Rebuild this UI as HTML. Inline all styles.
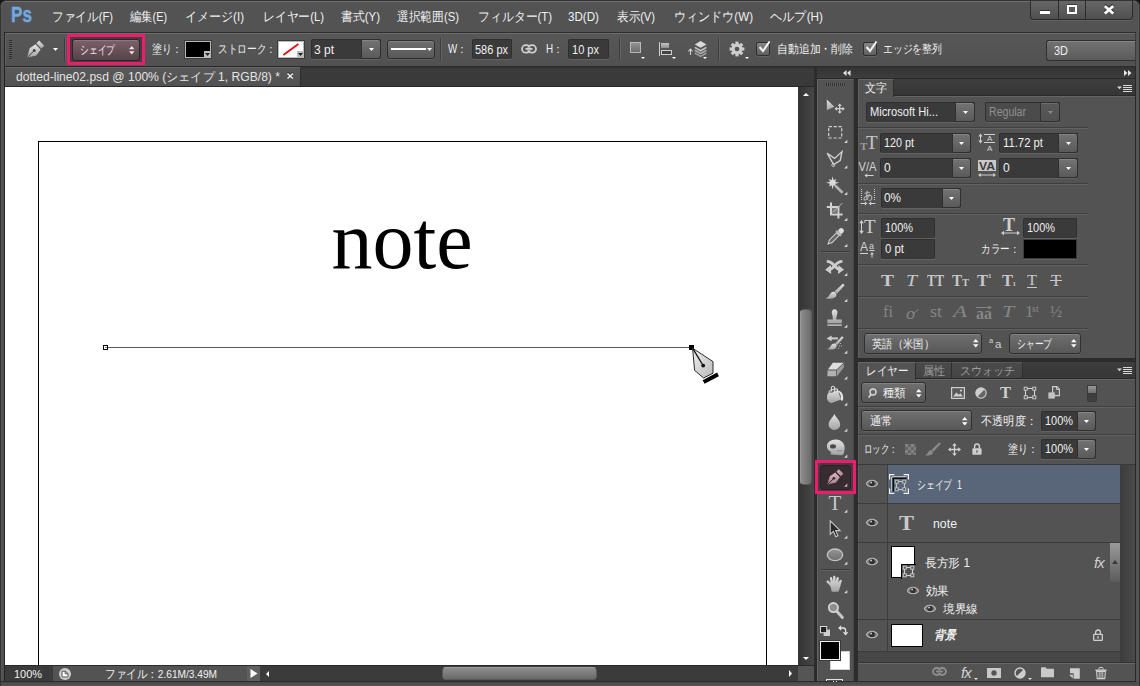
<!DOCTYPE html>
<html><head><meta charset="utf-8"><title>Photoshop</title><style>
html,body{margin:0;padding:0}
body{width:1140px;height:686px;overflow:hidden;background:#161616;position:relative;font-family:"Liberation Sans",sans-serif;font-size:12px;color:#f0f0f0}
div,span.t,svg{position:absolute;box-sizing:border-box}
span.t{white-space:nowrap;transform-origin:0 50%;display:block}
svg{overflow:visible}
</style></head>
<body>
<div style="left:0px;top:0px;width:1140px;height:686px;background:#535353;border:1px solid #333;border-bottom:none;border-radius:6px 6px 0 0;box-shadow:inset 0 1px 0 #707070, inset 1px 0 0 #5c5c5c, inset -1px 0 0 #5c5c5c"></div>
<div style="left:1px;top:8px;width:3px;height:678px;background:#535353"></div>
<div style="left:4px;top:32px;width:1px;height:650px;background:#242424"></div>
<div style="left:1135px;top:67px;width:1px;height:616px;background:#282828"></div>
<div style="left:1136px;top:33px;width:3px;height:653px;background:#545454"></div>
<div style="left:1135px;top:33px;width:1px;height:34px;background:#3c3c3c"></div>
<div style="left:1px;top:681px;width:1135px;height:1px;background:#2b2b2b"></div>
<div style="left:1px;top:682px;width:1138px;height:4px;background:linear-gradient(#474747,#565656)"></div>
<span id="t1" class="t" style="left:11.4px;top:2.1999999999999993px;height:26px;line-height:26px;font-size:21.5px;color:#72a7e0;transform:scaleX(0.7981);font-weight:bold;-webkit-text-stroke:0.4px #72a7e0;">Ps</span>
<span id="t2" class="t" style="left:52px;top:6.5px;height:20px;line-height:20px;font-size:12.5px;color:#f0f0f0;transform:scaleX(0.8975);">ファイル(F)</span>
<span id="t3" class="t" style="left:130px;top:6.5px;height:20px;line-height:20px;font-size:12.5px;color:#f0f0f0;transform:scaleX(0.8671);">編集(E)</span>
<span id="t4" class="t" style="left:185px;top:6.5px;height:20px;line-height:20px;font-size:12.5px;color:#f0f0f0;transform:scaleX(0.9246);">イメージ(I)</span>
<span id="t5" class="t" style="left:263px;top:6.5px;height:20px;line-height:20px;font-size:12.5px;color:#f0f0f0;transform:scaleX(0.9066);">レイヤー(L)</span>
<span id="t6" class="t" style="left:341px;top:6.5px;height:20px;line-height:20px;font-size:12.5px;color:#f0f0f0;transform:scaleX(0.9140);">書式(Y)</span>
<span id="t7" class="t" style="left:397px;top:6.5px;height:20px;line-height:20px;font-size:12.5px;color:#f0f0f0;transform:scaleX(0.9028);">選択範囲(S)</span>
<span id="t8" class="t" style="left:478px;top:6.5px;height:20px;line-height:20px;font-size:12.5px;color:#f0f0f0;transform:scaleX(0.9139);">フィルター(T)</span>
<span id="t9" class="t" style="left:568px;top:6.5px;height:20px;line-height:20px;font-size:12.5px;color:#f0f0f0;transform:scaleX(0.9297);">3D(D)</span>
<span id="t10" class="t" style="left:617px;top:6.5px;height:20px;line-height:20px;font-size:12.5px;color:#f0f0f0;transform:scaleX(0.8905);">表示(V)</span>
<span id="t11" class="t" style="left:674px;top:6.5px;height:20px;line-height:20px;font-size:12.5px;color:#f0f0f0;transform:scaleX(0.9280);">ウィンドウ(W)</span>
<span id="t12" class="t" style="left:770px;top:6.5px;height:20px;line-height:20px;font-size:12.5px;color:#f0f0f0;transform:scaleX(0.9404);">ヘルプ(H)</span>
<div style="left:1030px;top:0px;width:103px;height:20px;background:linear-gradient(#676767,#4f4f4f);border:1px solid #2b2b2b;border-top-color:#333;border-radius:0 0 4px 4px;box-shadow:0 1px 0 #626262"></div>
<div style="left:1058px;top:0px;width:1px;height:19px;background:#2b2b2b"></div>
<div style="left:1085px;top:0px;width:1px;height:19px;background:#2b2b2b"></div>
<div style="left:1040px;top:11px;width:10px;height:3px;background:#fff;box-shadow:0 -1px 0 #333"></div>
<div style="left:1067px;top:5px;width:10px;height:9px;border:2px solid #fff;background:#5a5a5a;box-shadow:0 -1px 0 #3a3a3a"></div>
<svg style="left:1103px;top:4px;" width="12" height="11" viewBox="0 0 12 11"><path d="M1.8 2L10.2 9.4M10.2 2L1.8 9.4" stroke="#2e2e2e" stroke-width="3" transform="translate(0,-1)"/><path d="M1.8 2L10.2 9.4M10.2 2L1.8 9.4" stroke="#fff" stroke-width="2.7"/></svg>
<div style="left:5px;top:32px;width:1131px;height:1px;background:#2f2f2f"></div>
<div style="left:5px;top:33px;width:1130px;height:33px;background:linear-gradient(#575757,#515151);border-top:1px solid #6b6b6b;border-left:1px solid #626262"></div>
<div style="left:5px;top:66px;width:1131px;height:1px;background:#2a2a2a"></div>
<div style="left:9px;top:40px;width:3px;height:20px;background:repeating-linear-gradient(#303030 0 1px,#595959 1px 2px)"></div>
<svg style="left:26px;top:39px;" width="20" height="20" viewBox="0 0 20 20"><defs><linearGradient id="og" x1="0" y1="0" x2="0" y2="1"><stop offset="0" stop-color="#e4e4e4"/><stop offset="1" stop-color="#a4a4a4"/></linearGradient></defs>
    <path d="M1.2 18.6L3.6 9.2L9.4 5.2L14.6 10.4L10.4 16.4Z" fill="url(#og)"/>
    <path d="M10.4 4.4L13 1.6L18.2 6.8L15.4 9.4Z" fill="url(#og)"/>
    <path d="M1.6 18.2L7.6 12.2" stroke="#444" stroke-width="1"/><circle cx="8.2" cy="11.6" r="1.5" fill="#444"/></svg>
<svg style="left:53.0px;top:48.0px;" width="5" height="3" viewBox="0 0 5 3"><path d="M0 0H5L2.5 3Z" fill="#fff"/></svg>
<div style="left:64px;top:38px;width:1px;height:23px;background:#3c3c3c"></div>
<div style="left:65px;top:38px;width:1px;height:23px;background:#646464"></div>
<div style="left:67px;top:34px;width:78px;height:31px;background:#4b3b40;border:3px solid #ec1d6d"></div>
<div style="left:72px;top:39px;width:68px;height:22px;background:linear-gradient(#7c6169,#56424a);border:1px solid #2e2327;border-radius:3px;box-shadow:inset 0 1px 0 rgba(255,255,255,.15)"></div>
<span id="t13" class="t" style="left:80px;top:40.0px;height:20px;line-height:20px;font-size:12px;color:#f6e1e8;transform:scaleX(0.7292);">シェイプ</span>
<svg style="left:129.25px;top:45.75px;" width="5.5" height="8.5" viewBox="0 0 5.5 8.5"><path d="M0 3.2L2.75 0L5.5 3.2Z M0 5.3L2.75 8.5L5.5 5.3Z" fill="#f6dfe6"/></svg>
<span id="t14" class="t" style="left:152px;top:39.0px;height:20px;line-height:20px;font-size:12px;color:#f0f0f0;transform:scaleX(0.8333);">塗り：</span>
<div style="left:185px;top:41px;width:26px;height:17px;background:#000;border:1px solid #b9b9b9;box-shadow:0 0 0 1px #3c3c3c"></div>
<div style="left:204px;top:51px;width:6px;height:6px;background:#bdbdbd"></div>
<svg style="left:204.5px;top:53.0px;" width="5" height="3" viewBox="0 0 5 3"><path d="M0 0H5L2.5 3Z" fill="#222"/></svg>
<span id="t15" class="t" style="left:218px;top:39.0px;height:20px;line-height:20px;font-size:12px;color:#f0f0f0;transform:scaleX(0.8056);">ストローク：</span>
<div style="left:278px;top:41px;width:26px;height:17px;background:#fff;border:1px solid #b9b9b9;box-shadow:0 0 0 1px #3c3c3c"></div>
<svg style="left:282px;top:43px;" width="18" height="13" viewBox="0 0 18 13"><path d="M1.4 12L16.4 1" stroke="#e0151c" stroke-width="2"/></svg>
<div style="left:297px;top:51px;width:6px;height:6px;background:#bdbdbd"></div>
<svg style="left:297.5px;top:53.0px;" width="5" height="3" viewBox="0 0 5 3"><path d="M0 0H5L2.5 3Z" fill="#222"/></svg>
<div style="left:311px;top:39px;width:70px;height:20px;background:#3a3a3a;border:1px solid #2f2f2f;border-bottom-color:#383838;border-radius:2px;box-shadow:0 1px 0 #626262"></div>
<div style="left:361px;top:39px;width:20px;height:20px;background:linear-gradient(#737373,#5a5a5a);border:1px solid #2f2f2f;border-radius:0 3px 3px 0;box-shadow:inset 0 1px 0 rgba(255,255,255,.13)"></div>
<svg style="left:368.5px;top:48.0px;" width="5" height="3" viewBox="0 0 5 3"><path d="M0 0H5L2.5 3Z" fill="#fff"/></svg>
<span id="t16" class="t" style="left:314px;top:39.5px;height:20px;line-height:20px;font-size:12px;color:#f0f0f0;transform:scaleX(0.9992);">3 pt</span>
<div style="left:387px;top:40px;width:48px;height:19px;background:linear-gradient(#6f6f6f,#585858);border:1px solid #2f2f2f;border-radius:3px;box-shadow:inset 0 1px 0 rgba(255,255,255,.14),0 1px 0 #5f5f5f;"></div>
<div style="left:391px;top:48px;width:35px;height:2px;background:#fff"></div>
<svg style="left:427.0px;top:48.0px;" width="5" height="3" viewBox="0 0 5 3"><path d="M0 0H5L2.5 3Z" fill="#fff"/></svg>
<div style="left:440px;top:38px;width:1px;height:23px;background:#3c3c3c"></div>
<div style="left:441px;top:38px;width:1px;height:23px;background:#646464"></div>
<span id="t17" class="t" style="left:448px;top:39.0px;height:20px;line-height:20px;font-size:12px;color:#f0f0f0;transform:scaleX(0.8145);">W：</span>
<div style="left:472px;top:39px;width:40px;height:20px;background:#3a3a3a;border:1px solid #2f2f2f;border-bottom-color:#383838;border-radius:2px;box-shadow:0 1px 0 #626262"></div>
<span id="t18" class="t" style="left:475px;top:39.5px;height:20px;line-height:20px;font-size:12px;color:#f0f0f0;transform:scaleX(0.9159);">586 px</span>
<svg style="left:521px;top:44px;" width="16" height="10" viewBox="0 0 16 10"><g fill="none" stroke="#cfcfcf" stroke-width="1.8"><rect x="1" y="1.2" width="8" height="7.4" rx="3.7"/><rect x="7" y="1.2" width="8" height="7.4" rx="3.7"/></g><rect x="5" y="3.6" width="6" height="2.6" fill="#535353"/><path d="M4.5 4.9H11.5" stroke="#cfcfcf" stroke-width="1.8"/></svg>
<span id="t19" class="t" style="left:546px;top:39.0px;height:20px;line-height:20px;font-size:12px;color:#f0f0f0;transform:scaleX(0.8224);">H：</span>
<div style="left:568px;top:39px;width:41px;height:20px;background:#3a3a3a;border:1px solid #2f2f2f;border-bottom-color:#383838;border-radius:2px;box-shadow:0 1px 0 #626262"></div>
<span id="t20" class="t" style="left:572px;top:39.5px;height:20px;line-height:20px;font-size:12px;color:#f0f0f0;transform:scaleX(0.9196);">10 px</span>
<div style="left:619px;top:38px;width:1px;height:23px;background:#3c3c3c"></div>
<div style="left:620px;top:38px;width:1px;height:23px;background:#646464"></div>
<div style="left:630px;top:42px;width:11px;height:11px;background:linear-gradient(#929292,#6c6c6c);border:1px solid #b9b9b9"></div>
<svg style="left:640.5px;top:57.0px;" width="4" height="2" viewBox="0 0 4 2"><path d="M0 0H4L2.0 2Z" fill="#fff"/></svg>
<div style="left:658.5px;top:42px;width:1.4px;height:14px;background:#cfcfcf"></div>
<div style="left:661px;top:43px;width:8px;height:5px;background:linear-gradient(#c4c4c4,#8e8e8e)"></div>
<div style="left:661px;top:50px;width:11px;height:5px;border:1px solid #cfcfcf;background:#444"></div>
<svg style="left:671.5px;top:57.0px;" width="4" height="2" viewBox="0 0 4 2"><path d="M0 0H4L2.0 2Z" fill="#fff"/></svg>
<svg style="left:687px;top:39px;" width="22" height="20" viewBox="0 0 22 20"><path d="M3.5 10V16M1.4 12.4L3.5 10L5.6 12.4" stroke="#cdcdcd" stroke-width="1.1" fill="none"/>
    <path d="M7.8 5.4L13.6 2L19.4 5.4L13.6 8.8Z" fill="#dadada"/><path d="M7.8 8.4L13.6 11.8L19.4 8.4" stroke="#c2c2c2" stroke-width="1.6" fill="none"/>
    <path d="M7.8 11.2L13.6 14.6L19.4 11.2" stroke="#adadad" stroke-width="1.6" fill="none"/><path d="M7.8 14L13.6 17.4L19.4 14" stroke="#9a9a9a" stroke-width="1.5" fill="none"/></svg>
<svg style="left:702.5px;top:57.0px;" width="4" height="2" viewBox="0 0 4 2"><path d="M0 0H4L2.0 2Z" fill="#fff"/></svg>
<div style="left:718px;top:38px;width:1px;height:23px;background:#3c3c3c"></div>
<div style="left:719px;top:38px;width:1px;height:23px;background:#646464"></div>
<svg style="left:729px;top:41px;" width="16" height="16" viewBox="0 0 16 16"><g transform="translate(8,8)" fill="#cdcdcd"><rect x="-1.6" y="-7.4" width="3.2" height="4" transform="rotate(0)" /><rect x="-1.6" y="-7.4" width="3.2" height="4" transform="rotate(45)" /><rect x="-1.6" y="-7.4" width="3.2" height="4" transform="rotate(90)" /><rect x="-1.6" y="-7.4" width="3.2" height="4" transform="rotate(135)" /><rect x="-1.6" y="-7.4" width="3.2" height="4" transform="rotate(180)" /><rect x="-1.6" y="-7.4" width="3.2" height="4" transform="rotate(225)" /><rect x="-1.6" y="-7.4" width="3.2" height="4" transform="rotate(270)" /><rect x="-1.6" y="-7.4" width="3.2" height="4" transform="rotate(315)" /><circle r="5.4"/><circle r="2.3" fill="#535353"/></g></svg>
<svg style="left:745.0px;top:57.0px;" width="4" height="2" viewBox="0 0 4 2"><path d="M0 0H4L2.0 2Z" fill="#fff"/></svg>
<div style="left:756px;top:42px;width:14px;height:14px;background:linear-gradient(#868686,#5e5e5e);border:1px solid #2f2f2f;border-radius:2px;box-shadow:0 1px 0 #666"></div>
<svg style="left:757px;top:39px;" width="15" height="15" viewBox="0 0 15 15"><path d="M2.5 8L6 12L12.5 2.5" stroke="#f4f4f4" stroke-width="2" fill="none"/></svg>
<div style="left:863px;top:42px;width:14px;height:14px;background:linear-gradient(#868686,#5e5e5e);border:1px solid #2f2f2f;border-radius:2px;box-shadow:0 1px 0 #666"></div>
<svg style="left:864px;top:39px;" width="15" height="15" viewBox="0 0 15 15"><path d="M2.5 8L6 12L12.5 2.5" stroke="#f4f4f4" stroke-width="2" fill="none"/></svg>
<span id="t21" class="t" style="left:777px;top:39.0px;height:20px;line-height:20px;font-size:12px;color:#f0f0f0;transform:scaleX(0.9048);">自動追加・削除</span>
<span id="t22" class="t" style="left:883px;top:39.0px;height:20px;line-height:20px;font-size:12px;color:#f0f0f0;transform:scaleX(0.8194);">エッジを整列</span>
<div style="left:1046px;top:40px;width:89px;height:21px;background:linear-gradient(#727272,#5b5b5b);border:1px solid #2f2f2f;border-right:none;border-radius:3px 0 0 3px;box-shadow:inset 0 1px 0 rgba(255,255,255,.15)"></div>
<span id="t23" class="t" style="left:1054px;top:40.5px;height:20px;line-height:20px;font-size:12px;color:#f0f0f0;transform:scaleX(0.9124);">3D</span>
<div style="left:5px;top:67px;width:809px;height:20px;background:linear-gradient(#333 0,#3b3b3b 3px,#393939)"></div>
<div style="left:5px;top:67px;width:296px;height:20px;background:linear-gradient(#585858,#525252);border-right:1px solid #2c2c2c;border-top:1px solid #656565"></div>
<div style="left:5px;top:86px;width:809px;height:1px;background:#282828"></div>
<span id="t24" class="t" style="left:15.5px;top:67.3px;height:20px;line-height:20px;font-size:12px;color:#e4e4e4;transform:scaleX(1.0090);">dotted-line02.psd @ 100% (シェイプ 1, RGB/8) *</span>
<svg style="left:286.8px;top:73px;" width="6.4" height="6" viewBox="0 0 6.4 6"><path d="M0.5 0.5L5.9 5.5M5.9 0.5L0.5 5.5" stroke="#2e2e2e" stroke-width="1.6" transform="translate(0,-0.8)"/><path d="M0.5 0.5L5.9 5.5M5.9 0.5L0.5 5.5" stroke="#ececec" stroke-width="1.6"/></svg>
<div style="left:5px;top:87px;width:793px;height:578px;background:#fff"></div>
<div style="left:38px;top:141px;width:729px;height:540px;border:1px solid #000;border-bottom:none;background:#fff"></div>
<span id="note" class="t" style="left:331.5px;top:196px;height:90px;line-height:90px;font-size:82px;color:#000;font-family:'Liberation Serif',serif">note</span>
<div style="left:106px;top:347px;width:586px;height:1px;background:#5a5a5a"></div>
<div style="left:103px;top:345px;width:5px;height:5px;background:#fff;border:1px solid #000"></div>
<div style="left:105px;top:347px;width:2px;height:1px;background:#777"></div>
<div style="left:689px;top:345px;width:5px;height:5px;background:#000"></div>
<svg style="left:686px;top:342px;" width="36" height="44" viewBox="0 0 36 44"><defs><linearGradient id="pc" x1="0" y1="0" x2="1" y2="1"><stop offset="0" stop-color="#f2f2f2"/><stop offset="1" stop-color="#b9b9b9"/></linearGradient></defs>
    <path d="M6.6 6.2L8.6 28.4L17.6 36L27 31.2L27 19.6Z" fill="url(#pc)" stroke="#2a2a2a" stroke-width="1"/>
    <path d="M7 6.8L16.8 23" stroke="#111" stroke-width="1.3"/><circle cx="17.2" cy="23.6" r="1.9" fill="#111"/>
    <path d="M16.7 38.2L31.1 30.6L32.9 34.2L18.5 41.8Z" fill="#000"/></svg>
<div style="left:798px;top:87px;width:16px;height:578px;background:linear-gradient(90deg,#323232,#474747)"></div>
<div style="left:800px;top:309px;width:12px;height:176px;background:linear-gradient(90deg,#8d8d8d,#6b6b6b);border-radius:4px;border:1px solid #5a5a5a;border-left-color:#9a9a9a"></div>
<svg style="left:803px;top:93px;" width="6" height="3" viewBox="0 0 6 3"><path d="M0 3L3 0L6 3Z" fill="#fff"/></svg>
<svg style="left:803px;top:656.5px;" width="6" height="3" viewBox="0 0 6 3"><path d="M0 0L3 3L6 0Z" fill="#fff"/></svg>
<div style="left:5px;top:665px;width:809px;height:16px;background:#3b3b3b"></div>
<div style="left:5px;top:665px;width:809px;height:1px;background:#2b2b2b"></div>
<div style="left:53px;top:666px;width:194px;height:15px;background:#535353"></div>
<span id="t25" class="t" style="left:14px;top:663.5px;height:20px;line-height:20px;font-size:11.5px;color:#f2f2f2;transform:scaleX(0.9517);">100%</span>
<svg style="left:59px;top:668px;" width="12" height="12" viewBox="0 0 12 12"><circle cx="6" cy="6" r="6" fill="#cfcfcf"/><path d="M3 3.2H6.4L9 5.6V9H3Z" fill="#fff" stroke="#555" stroke-width="1"/><path d="M6.2 3.2V5.8H9" fill="none" stroke="#555" stroke-width="1"/></svg>
<span id="t26" class="t" style="left:105px;top:663.5px;height:20px;line-height:20px;font-size:11.5px;color:#f2f2f2;transform:scaleX(0.8810);">ファイル：2.61M/3.49M</span>
<div style="left:247px;top:666px;width:13px;height:15px;background:#606060"></div>
<svg style="left:250px;top:669px;" width="8" height="9" viewBox="0 0 8 9"><path d="M0.5 0L7.5 4.5L0.5 9Z" fill="#fff"/></svg>
<svg style="left:266px;top:670.5px;" width="3" height="6" viewBox="0 0 3 6"><path d="M3 0L0 3L3 6Z" fill="#fff"/></svg>
<svg style="left:789px;top:670px;" width="3" height="7" viewBox="0 0 3 7"><path d="M0 0L3 3.5L0 7Z" fill="#fff"/></svg>
<div style="left:442px;top:667px;width:155px;height:13px;background:linear-gradient(#8c8c8c,#6a6a6a);border-radius:4px;border:1px solid #5a5a5a;border-top-color:#9c9c9c"></div>
<div style="left:798px;top:666px;width:16px;height:15px;background:#555"></div>
<div style="left:814px;top:67px;width:3px;height:614px;background:#2c2c2c"></div>
<div style="left:854px;top:67px;width:4px;height:614px;background:#2c2c2c"></div>
<div style="left:817px;top:67px;width:318px;height:12px;background:linear-gradient(#333,#3d3d3d);border-bottom:1px solid #282828"></div>
<svg style="left:843px;top:70px;" width="8" height="6" viewBox="0 0 8 6"><path d="M3.5 0V6L0 3Z M7.5 0V6L4 3Z" fill="#e6e6e6"/></svg>
<svg style="left:1124px;top:70px;" width="8" height="6" viewBox="0 0 8 6"><path d="M0 0V6L3.5 3Z M4 0V6L7.5 3Z" fill="#e6e6e6"/></svg>
<div style="left:817px;top:79px;width:37px;height:602px;background:#535353;border-left:1px solid #626262;border-top:1px solid #626262;border-right:1px solid #484848"></div>
<div style="left:826px;top:83px;width:20px;height:3px;background:repeating-linear-gradient(90deg,#333 0 1px,#5c5c5c 1px 2px)"></div>
<div style="left:821px;top:251px;width:29px;height:1px;background:#3a3a3a"></div>
<div style="left:821px;top:252px;width:29px;height:1px;background:#616161"></div>
<div style="left:821px;top:569px;width:29px;height:1px;background:#3a3a3a"></div>
<div style="left:821px;top:570px;width:29px;height:1px;background:#616161"></div>
<div style="left:815px;top:460px;width:41px;height:34px;background:#493a3f;border:3px solid #ec1d6d"></div>
<div style="left:820px;top:465px;width:31px;height:25px;background:#372d30;border:1px solid #2a2225;border-radius:3px"></div>
<svg style="left:0px;top:0px;pointer-events:none" width="1140" height="686" viewBox="0 0 1140 686"><defs><linearGradient id="tg" x1="0" y1="0" x2="0" y2="1"><stop offset="0" stop-color="#e2e2e2"/><stop offset="1" stop-color="#a2a2a2"/></linearGradient><linearGradient id="pk" x1="0" y1="0" x2="0" y2="1"><stop offset="0" stop-color="#d9b2bf"/><stop offset="1" stop-color="#a8838f"/></linearGradient></defs><path d="M847.3 139.8V143H844.1Z" fill="#d4d4d4"/><path d="M847.3 165.3V168.5H844.1Z" fill="#d4d4d4"/><path d="M847.3 191.8V195H844.1Z" fill="#d4d4d4"/><path d="M847.3 217.8V221H844.1Z" fill="#d4d4d4"/><path d="M847.3 243.8V247H844.1Z" fill="#d4d4d4"/><path d="M847.3 272.8V276H844.1Z" fill="#d4d4d4"/><path d="M847.3 298.8V302H844.1Z" fill="#d4d4d4"/><path d="M847.3 324.5V327.7H844.1Z" fill="#d4d4d4"/><path d="M847.3 350.5V353.7H844.1Z" fill="#d4d4d4"/><path d="M847.3 376.3V379.5H844.1Z" fill="#d4d4d4"/><path d="M847.3 402.5V405.7H844.1Z" fill="#d4d4d4"/><path d="M847.3 428.5V431.7H844.1Z" fill="#d4d4d4"/><path d="M847.3 454.6V457.8H844.1Z" fill="#d4d4d4"/><path d="M847.3 509.59999999999997V512.8H844.1Z" fill="#d4d4d4"/><path d="M847.3 535.5V538.7H844.1Z" fill="#d4d4d4"/><path d="M847.3 561.5V564.7H844.1Z" fill="#d4d4d4"/><path d="M847.3 590.0999999999999V593.3H844.1Z" fill="#d4d4d4"/><path d="M847.3 483.6V486.8H844.1Z" fill="#d9aebb"/><path d="M826.8 99.6V110.2L834.4 106.8Z" fill="url(#tg)"/><g stroke="#d2d2d2" stroke-width="1.3" fill="none"><path d="M835.6 108.7H843.8M839.7 104.6V112.8"/></g><path d="M839.7 103.6L841.7 106H837.7Z M839.7 113.8L841.7 111.4H837.7Z M834.6 108.7L837 106.7V110.7Z M844.8 108.7L842.4 106.7V110.7Z" fill="#d2d2d2"/><rect x="828.7" y="126.6" width="13" height="11.4" fill="none" stroke="#d0d0d0" stroke-width="1.2" stroke-dasharray="3.2 1.7"/><path d="M827.2 153.2L834.6 158.4L842 151.6L840.2 160.6L833.6 164.6Z" fill="none" stroke="#cfcfcf" stroke-width="1.4" stroke-linejoin="miter"/><path d="M833.8 163.2C831 164 831.2 166.6 833.6 166.6C835.2 166.4 834.6 164.4 833.2 164.8" fill="none" stroke="#cfcfcf" stroke-width="1"/><polygon points="832.6,176.2 833.6,180.3 836.4,179.0 835.1,181.8 839.2,182.8 835.1,183.8 836.4,186.6 833.6,185.3 832.6,189.4 831.6,185.3 828.8,186.6 830.1,183.8 826.0,182.8 830.1,181.8 828.8,179.0 831.6,180.3" fill="#dadada"/><path d="M835.4 185.8L842.6 192.8" stroke="#b4b4b4" stroke-width="2.6"/><g stroke="#d2d2d2" stroke-width="2" fill="none"><path d="M831 202.6V214.4H842.6"/><path d="M826.8 207H838.4V218.4"/></g><rect x="832" y="208" width="5.4" height="5.4" fill="#777"/><path d="M842.4 203L833 212.4" stroke="#bdbdbd" stroke-width="1"/><g transform="translate(835,237) rotate(45)"><rect x="-2.6" y="-11.4" width="5.2" height="5.6" rx="2.4" fill="#dedede"/><rect x="-3.6" y="-6.4" width="7.2" height="2.2" fill="#b0b0b0"/><path d="M-1.9 -4.2H1.9V6L0 9.8L-1.9 6Z" fill="#6a6a6a" stroke="#d6d6d6" stroke-width="1"/></g><g fill="none" stroke="#cecece" stroke-width="2.9"><path d="M826.8 261.4C834.5 261.4 834.5 269.4 840.4 269.6"/><path d="M842.4 261.4C834.7 261.4 834.7 269.4 828.8 269.6"/></g><path d="M838.4 265L844 269.8L838 274Z M830.8 265L825.2 269.8L831.2 274Z" fill="#cecece"/><path d="M843 283.6L844.6 285.2L837 293.8L834.4 291.6Z" fill="url(#tg)"/><path d="M834 291.8C837 293 837.2 296 834.8 297.6C831.8 299.2 828 299 825.6 298.2C828 297.4 829 296 830 294.2C831 292.4 832.6 291.2 834 291.8Z" fill="url(#tg)"/><path d="M831.8 313A2.9 2.9 0 1 1 837.4 313C837.2 315 836 316.6 836.4 319.6H841.8V323.2H827.4V319.6H832.8C833.2 316.6 832 315 831.8 313Z" fill="url(#tg)"/><rect x="827.4" y="324.4" width="14.4" height="1.4" fill="#c4c4c4"/><path d="M842 336.2L843.6 337.6L837.2 345.2L835 343.4Z" fill="url(#tg)"/><path d="M834.8 343.6C837.2 344.6 837.4 347 835.4 348.4C832.8 349.8 829.6 349.8 827.2 349.2C829.4 348.4 830.2 347 831 345.6C832 344 833.4 343 834.8 343.6Z" fill="url(#tg)"/><path d="M830.6 338.4H838" fill="none" stroke="#cdcdcd" stroke-width="2"/><path d="M826.6 338.4L831.6 335.6V341.2Z" fill="#cdcdcd"/><path d="M840.4 343V344M839.6 345.4V346.4M838.6 347.8V348.8M841.6 345.4V346.4" stroke="#d0d0d0" stroke-width="0.9"/><path d="M832.8 362.8H843.6L836.6 369.6H828Z" fill="#dedede"/><path d="M827.6 370.4H836.2V376.2H827.4Z" fill="#b2b2b2"/><path d="M837 370L843.8 363.6V367.6L837 376.2Z" fill="#9a9a9a"/><path d="M829 392.4L837.6 389.6L841 399.6L832.4 402.8C829.4 403.8 826.4 400.4 827 396.6C827.2 394.6 828 393 829 392.4Z" fill="url(#tg)"/><ellipse cx="833.3" cy="391" rx="4.5" ry="1.7" transform="rotate(-18 833.3 391)" fill="#707070" stroke="#e0e0e0" stroke-width="1"/><path d="M831.4 391.4V387.6C831.4 385.8 834.6 385.8 834.6 387.6V392" fill="none" stroke="#d6d6d6" stroke-width="1.1"/><path d="M838 390.6C841 391 843 393.4 843.2 397.4C843.4 399.6 842.6 400.8 841.8 400.8C840.8 400.8 840.6 399.2 840.8 397.6C841 395 840 393 838 391.8Z" fill="#e6e6e6"/><path d="M834.4 414C836.4 417.8 840.2 420.8 840.2 424.4A5.8 5.6 0 0 1 828.6 424.4C828.6 420.8 832.4 417.8 834.4 414Z" fill="url(#tg)"/><path d="M827 446.8C826.4 442.6 831 439.4 836 439.6C841.6 439.8 845.2 444 844.6 449C844.2 452.4 843.6 454.8 842 455.2L831.4 454.4C830 454.2 830.2 452.6 831.6 452.2L829.4 451C827.6 450 827.2 448.4 827 446.8Z" fill="url(#tg)"/><ellipse cx="833" cy="446.4" rx="3" ry="2.1" fill="#4a4a4a"/><path d="M836.6 450.8H842.6" stroke="#8a8a8a" stroke-width="0.9"/><path d="M827.4 484.6L829.8 476.2L835.2 472.6L839.8 477.2L836 482.6Z" fill="url(#pk)"/><path d="M836.4 471.8L838.8 469.2L843.4 473.8L840.8 476.2Z" fill="url(#pk)"/><path d="M827.8 484.2L833.4 478.8" stroke="#3a2c30" stroke-width="1"/><circle cx="833.9" cy="478.3" r="1.4" fill="#3a2c30"/><path d="M830.2 520.8V534.2L833.4 531.4L835.8 536.8L838 535.8L835.7 530.6H840.2Z" fill="#2a2a2a" stroke="#c6c6c6" stroke-width="1.1" stroke-linejoin="miter"/><defs><linearGradient id="eg" x1="0" y1="0" x2="0" y2="1"><stop offset="0" stop-color="#929292"/><stop offset="1" stop-color="#727272"/></linearGradient></defs><ellipse cx="835" cy="554.8" rx="7.7" ry="5.8" fill="url(#eg)" stroke="#c4c4c4" stroke-width="1.3"/><path d="M829.8 585.4L826.6 582.2C825.8 581 827.4 579.8 828.6 580.8L830.6 582.8L830 578.4C829.8 576.8 831.8 576.6 832.2 578L833 581.6L833.2 577C833.2 575.4 835.4 575.4 835.4 577L835.6 581.6L836.6 577.8C837 576.4 839 576.8 838.8 578.4L838.2 582.6L839.8 580.2C840.6 579 842.4 580 841.8 581.4C840.6 584.4 840.4 586.6 839.6 588.8C839 590.6 838.4 591.8 838.4 591.8H831.6C831.6 589.6 830.8 587 829.8 585.4Z" fill="url(#tg)"/><path d="M837 611.6L842.4 617.4" stroke="#c9c9c9" stroke-width="3" stroke-linecap="round"/><circle cx="833.4" cy="607.6" r="4.6" fill="#8e8e8e" stroke="#d4d4d4" stroke-width="1.8"/><rect x="823.6" y="629.6" width="6.4" height="6.4" fill="#cfcfcf"/><rect x="820.5" y="626.5" width="6.2" height="6.2" fill="#222" stroke="#d8d8d8" stroke-width="1"/><path d="M840.6 628H843.4C845.2 628 845.6 629 845.6 630.6V632.6" fill="none" stroke="#e0e0e0" stroke-width="1.3"/><path d="M838 628L841.2 625.2V630.8Z M845.6 635.6L842.8 632.2H848.4Z" fill="#e0e0e0"/></svg>
<span class="t" style="left:828.4px;top:489.8px;height:26px;line-height:26px;font-size:21px;color:#c6c6c6;font-family:'Liberation Serif',serif">T</span>
<div style="left:830px;top:651px;width:20px;height:19px;background:#fff;border:1px solid #d0d0d0"></div>
<div style="left:820px;top:641px;width:20px;height:19px;background:#000;border:1px solid #f2f2f2;box-shadow:0 0 0 1px #3a3a3a"></div>
<div style="left:826px;top:679px;width:17px;height:2px;border:1px solid #e2e2e2;border-bottom:none"></div>
<div style="left:833px;top:680.5px;width:1.3px;height:1px;background:#e2e2e2"></div>
<div style="left:835.5px;top:680.5px;width:1.3px;height:1px;background:#e2e2e2"></div>
<div style="left:858px;top:79px;width:277px;height:17px;background:linear-gradient(#3e3e3e,#363636)"></div>
<div style="left:858px;top:79px;width:36px;height:18px;background:#535353;border-top:1px solid #676767;border-left:1px solid #626262;border-right:1px solid #2e2e2e"></div>
<div style="left:894px;top:95px;width:241px;height:1px;background:#2a2a2a"></div>
<div style="left:894px;top:96px;width:241px;height:1px;background:#646464"></div>
<div style="left:858px;top:97px;width:277px;height:262px;background:#535353;border-left:1px solid #5f5f5f"></div>
<div style="left:858px;top:358px;width:277px;height:1px;background:#2c2c2c"></div>
<div style="left:858px;top:359px;width:277px;height:3px;background:#2c2c2c"></div>
<span id="t27" class="t" style="left:865px;top:78.0px;height:20px;line-height:20px;font-size:12px;color:#f0f0f0;transform:scaleX(0.9167);">文字</span>
<svg style="left:1117px;top:84.5px;" width="15" height="7" viewBox="0 0 15 7"><path d="M0 1.4H5L2.5 4.2Z" fill="#d8d8d8"/><path d="M6 0.5H15M6 2.5H15M6 4.5H15M6 6.5H15" stroke="#d8d8d8" stroke-width="1"/></svg>
<div style="left:866px;top:102px;width:109px;height:20px;background:#3a3a3a;border:1px solid #2f2f2f;border-bottom-color:#383838;border-radius:2px;box-shadow:0 1px 0 #626262"></div>
<div style="left:955px;top:102px;width:20px;height:20px;background:linear-gradient(#737373,#5a5a5a);border:1px solid #2f2f2f;border-radius:0 3px 3px 0;box-shadow:inset 0 1px 0 rgba(255,255,255,.13)"></div>
<svg style="left:962.5px;top:111.0px;" width="5" height="3" viewBox="0 0 5 3"><path d="M0 0H5L2.5 3Z" fill="#fff"/></svg>
<span id="t28" class="t" style="left:870px;top:102.0px;height:20px;line-height:20px;font-size:12px;color:#f0f0f0;transform:scaleX(0.9271);">Microsoft Hi...</span>
<div style="left:985px;top:102px;width:75px;height:20px;background:#4b4b4b;border:1px solid #2f2f2f;border-bottom-color:#383838;border-radius:2px;box-shadow:0 1px 0 #626262"></div>
<div style="left:1040px;top:102px;width:20px;height:20px;background:linear-gradient(#595959,#515151);border:1px solid #2f2f2f;border-radius:0 3px 3px 0;box-shadow:inset 0 1px 0 rgba(255,255,255,.13)"></div>
<svg style="left:1047.5px;top:111.0px;" width="5" height="3" viewBox="0 0 5 3"><path d="M0 0H5L2.5 3Z" fill="#8a8a8a"/></svg>
<span id="t29" class="t" style="left:989px;top:102.0px;height:20px;line-height:20px;font-size:12px;color:#909090;transform:scaleX(0.8803);">Regular</span>
<div style="left:858px;top:127px;width:230px;height:1px;background:#3f3f3f"></div>
<div style="left:858px;top:128px;width:230px;height:1px;background:#626262"></div>
<span id="t30" class="t" style="left:860px;top:134.0px;height:24px;line-height:24px;font-size:11px;color:#9c9c9c;font-family:'Liberation Serif',serif;font-weight:bold;">T</span>
<span id="t31" class="t" style="left:866px;top:131.2px;height:24px;line-height:24px;font-size:19px;color:#c8c8c8;font-family:'Liberation Serif',serif;">T</span>
<div style="left:880px;top:133px;width:91px;height:20px;background:#3a3a3a;border:1px solid #2f2f2f;border-bottom-color:#383838;border-radius:2px;box-shadow:0 1px 0 #626262"></div>
<div style="left:952px;top:133px;width:19px;height:20px;background:linear-gradient(#737373,#5a5a5a);border:1px solid #2f2f2f;border-radius:0 3px 3px 0;box-shadow:inset 0 1px 0 rgba(255,255,255,.13)"></div>
<svg style="left:959.0px;top:142.0px;" width="5" height="3" viewBox="0 0 5 3"><path d="M0 0H5L2.5 3Z" fill="#fff"/></svg>
<span id="t32" class="t" style="left:884px;top:133.0px;height:20px;line-height:20px;font-size:12px;color:#f0f0f0;transform:scaleX(0.8989);">120 pt</span>
<svg style="left:978px;top:133px;" width="18" height="19" viewBox="0 0 18 19"><g stroke="#cfcfcf" stroke-width="1" fill="none"><path d="M6 1.5H17M6 9.5H17"/><path d="M2.5 2V9"/></g><path d="M2.5 0.5L4.6 3.4H0.4Z M2.5 10.5L4.6 7.6H0.4Z" fill="#cfcfcf"/><text x="11.6" y="8.3" font-size="8" font-family="Liberation Sans" fill="#d6d6d6" text-anchor="middle">A</text><text x="11.6" y="18" font-size="8" font-family="Liberation Sans" fill="#d6d6d6" text-anchor="middle">A</text></svg>
<div style="left:999px;top:133px;width:79px;height:20px;background:#3a3a3a;border:1px solid #2f2f2f;border-bottom-color:#383838;border-radius:2px;box-shadow:0 1px 0 #626262"></div>
<div style="left:1058px;top:133px;width:20px;height:20px;background:linear-gradient(#737373,#5a5a5a);border:1px solid #2f2f2f;border-radius:0 3px 3px 0;box-shadow:inset 0 1px 0 rgba(255,255,255,.13)"></div>
<svg style="left:1065.5px;top:142.0px;" width="5" height="3" viewBox="0 0 5 3"><path d="M0 0H5L2.5 3Z" fill="#fff"/></svg>
<span id="t33" class="t" style="left:1003px;top:133.0px;height:20px;line-height:20px;font-size:12px;color:#f0f0f0;transform:scaleX(0.9415);">11.72 pt</span>
<svg style="left:858px;top:160px;" width="19" height="18" viewBox="0 0 19 18"><text x="0.5" y="11" font-size="12.5" font-family="Liberation Sans" fill="#d2d2d2" textLength="18" lengthAdjust="spacingAndGlyphs">V/A</text><path d="M8.6 15.5H15.6" stroke="#cfcfcf" stroke-width="1"/><path d="M6.4 15.5L9.2 13.4V17.6Z" fill="#cfcfcf"/></svg>
<div style="left:880px;top:158px;width:91px;height:20px;background:#3a3a3a;border:1px solid #2f2f2f;border-bottom-color:#383838;border-radius:2px;box-shadow:0 1px 0 #626262"></div>
<div style="left:952px;top:158px;width:19px;height:20px;background:linear-gradient(#737373,#5a5a5a);border:1px solid #2f2f2f;border-radius:0 3px 3px 0;box-shadow:inset 0 1px 0 rgba(255,255,255,.13)"></div>
<svg style="left:959.0px;top:167.0px;" width="5" height="3" viewBox="0 0 5 3"><path d="M0 0H5L2.5 3Z" fill="#fff"/></svg>
<span id="t34" class="t" style="left:884px;top:158.0px;height:20px;line-height:20px;font-size:12px;color:#f0f0f0;">0</span>
<div style="left:978px;top:160px;width:18px;height:11px;background:#c9c9c9"></div>
<svg style="left:978px;top:160px;" width="18" height="18" viewBox="0 0 18 18"><text x="1" y="10" font-size="11.5" font-weight="bold" font-family="Liberation Sans" fill="#3b3b3b" textLength="16" lengthAdjust="spacingAndGlyphs">VA</text><path d="M2 15H16" stroke="#cfcfcf" stroke-width="1"/><path d="M0 15L2.8 12.9V17.1Z M18 15L15.2 12.9V17.1Z" fill="#cfcfcf"/></svg>
<div style="left:999px;top:158px;width:79px;height:20px;background:#3a3a3a;border:1px solid #2f2f2f;border-bottom-color:#383838;border-radius:2px;box-shadow:0 1px 0 #626262"></div>
<div style="left:1058px;top:158px;width:20px;height:20px;background:linear-gradient(#737373,#5a5a5a);border:1px solid #2f2f2f;border-radius:0 3px 3px 0;box-shadow:inset 0 1px 0 rgba(255,255,255,.13)"></div>
<svg style="left:1065.5px;top:167.0px;" width="5" height="3" viewBox="0 0 5 3"><path d="M0 0H5L2.5 3Z" fill="#fff"/></svg>
<span id="t35" class="t" style="left:1003px;top:158.0px;height:20px;line-height:20px;font-size:12px;color:#f0f0f0;">0</span>
<div style="left:858px;top:183px;width:230px;height:1px;background:#3f3f3f"></div>
<div style="left:858px;top:184px;width:230px;height:1px;background:#626262"></div>
<svg style="left:860px;top:189px;" width="16" height="18" viewBox="0 0 16 18"><path d="M1.5 0V11M14.5 0V11" stroke="#cfcfcf" stroke-width="1" stroke-dasharray="1 1"/><path d="M0.5 14.5H6M15.5 14.5H10" stroke="#cfcfcf" stroke-width="1"/><path d="M7.4 14.5L4.8 12.4V16.6Z M8.6 14.5L11.2 12.4V16.6Z" fill="#cfcfcf"/></svg>
<span id="t36" class="t" style="left:863px;top:188.0px;height:14px;line-height:14px;font-size:10.5px;color:#d4d4d4;transform:scaleX(0.9091);">あ</span>
<div style="left:881px;top:188px;width:80px;height:20px;background:#3a3a3a;border:1px solid #2f2f2f;border-bottom-color:#383838;border-radius:2px;box-shadow:0 1px 0 #626262"></div>
<div style="left:942px;top:188px;width:19px;height:20px;background:linear-gradient(#737373,#5a5a5a);border:1px solid #2f2f2f;border-radius:0 3px 3px 0;box-shadow:inset 0 1px 0 rgba(255,255,255,.13)"></div>
<svg style="left:949.0px;top:197.0px;" width="5" height="3" viewBox="0 0 5 3"><path d="M0 0H5L2.5 3Z" fill="#fff"/></svg>
<span id="t37" class="t" style="left:884px;top:188.0px;height:20px;line-height:20px;font-size:12px;color:#f0f0f0;transform:scaleX(0.9802);">0%</span>
<div style="left:858px;top:213px;width:230px;height:1px;background:#3f3f3f"></div>
<div style="left:858px;top:214px;width:230px;height:1px;background:#626262"></div>
<svg style="left:859px;top:220px;" width="5" height="14" viewBox="0 0 5 14"><path d="M2.5 2V12" stroke="#cfcfcf" stroke-width="1"/><path d="M2.5 0L4.8 3.2H0.2Z M2.5 14L4.8 10.8H0.2Z" fill="#cfcfcf"/></svg>
<span id="t38" class="t" style="left:864px;top:214.5px;height:24px;line-height:24px;font-size:19px;color:#cfcfcf;font-family:'Liberation Serif',serif;">T</span>
<div style="left:881px;top:218px;width:54px;height:20px;background:#3a3a3a;border:1px solid #2f2f2f;border-bottom-color:#383838;border-radius:2px;box-shadow:0 1px 0 #626262"></div>
<span id="t39" class="t" style="left:885px;top:218.0px;height:20px;line-height:20px;font-size:12px;color:#f0f0f0;transform:scaleX(0.9120);">100%</span>
<span id="t40" class="t" style="left:1003px;top:212.5px;height:24px;line-height:24px;font-size:18px;color:#cfcfcf;font-family:'Liberation Serif',serif;font-weight:bold;">T</span>
<svg style="left:1001px;top:230px;" width="19" height="6" viewBox="0 0 19 6"><path d="M2 3H17" stroke="#cfcfcf" stroke-width="1"/><path d="M0 3L3 0.8V5.2Z M19 3L16 0.8V5.2Z" fill="#cfcfcf"/></svg>
<div style="left:1023px;top:218px;width:54px;height:20px;background:#3a3a3a;border:1px solid #2f2f2f;border-bottom-color:#383838;border-radius:2px;box-shadow:0 1px 0 #626262"></div>
<span id="t41" class="t" style="left:1027px;top:218.0px;height:20px;line-height:20px;font-size:12px;color:#f0f0f0;transform:scaleX(0.9120);">100%</span>
<svg style="left:860px;top:241px;" width="17" height="17" viewBox="0 0 17 17"><text x="0" y="10" font-size="12" font-family="Liberation Sans" fill="#d2d2d2">A</text><path d="M0 12.5H8" stroke="#d2d2d2" stroke-width="1"/><text x="9" y="7.5" font-size="9" font-family="Liberation Sans" fill="#d2d2d2">a</text><path d="M9.5 9.5H14.5" stroke="#d2d2d2" stroke-width="1"/><path d="M12 12V16.5" stroke="#d2d2d2" stroke-width="1"/><path d="M12 11L13.9 13.4H10.1Z" fill="#d2d2d2"/></svg>
<div style="left:881px;top:239px;width:54px;height:20px;background:#3a3a3a;border:1px solid #2f2f2f;border-bottom-color:#383838;border-radius:2px;box-shadow:0 1px 0 #626262"></div>
<span id="t42" class="t" style="left:885px;top:239.0px;height:20px;line-height:20px;font-size:12px;color:#f0f0f0;transform:scaleX(0.9493);">0 pt</span>
<span id="t43" class="t" style="left:981px;top:239.0px;height:20px;line-height:20px;font-size:12px;color:#f0f0f0;transform:scaleX(0.7917);">カラー：</span>
<div style="left:1023px;top:239px;width:54px;height:20px;background:#000;border:1px solid #3c3c3c;box-shadow:0 1px 0 #626262"></div>
<div style="left:858px;top:264px;width:230px;height:1px;background:#3f3f3f"></div>
<div style="left:858px;top:265px;width:230px;height:1px;background:#626262"></div>
<span id="t44" class="t" style="left:881px;top:268.5px;height:24px;line-height:24px;font-size:17px;color:#c8c8c8;transform:scaleX(1.1460);font-family:'Liberation Serif',serif;font-weight:bold;">T</span>
<span id="t45" class="t" style="left:906px;top:268.5px;height:24px;line-height:24px;font-size:17px;color:#c8c8c8;transform:scaleX(1.1617);font-family:'Liberation Serif',serif;font-style:italic;">T</span>
<span id="t46" class="t" style="left:927px;top:268.5px;height:24px;line-height:24px;font-size:16px;color:#c8c8c8;transform:scaleX(0.7965);font-family:'Liberation Serif',serif;font-weight:bold;">TT</span>
<span id="t47" class="t" style="left:952px;top:268.5px;height:24px;line-height:24px;font-size:16px;color:#c8c8c8;transform:scaleX(0.9370);font-family:'Liberation Serif',serif;font-weight:bold;">T</span>
<span id="t48" class="t" style="left:962px;top:270.0px;height:24px;line-height:24px;font-size:11px;color:#c8c8c8;transform:scaleX(0.9532);font-family:'Liberation Serif',serif;font-weight:bold;">T</span>
<span id="t49" class="t" style="left:977px;top:268.5px;height:24px;line-height:24px;font-size:16px;color:#c8c8c8;transform:scaleX(1.0307);font-family:'Liberation Serif',serif;font-weight:bold;">T</span>
<span id="t50" class="t" style="left:988px;top:264.0px;height:24px;line-height:24px;font-size:7px;color:#c8c8c8;font-family:'Liberation Serif',serif;font-weight:bold;">1</span>
<span id="t51" class="t" style="left:1002px;top:268.5px;height:24px;line-height:24px;font-size:16px;color:#c8c8c8;transform:scaleX(1.0307);font-family:'Liberation Serif',serif;font-weight:bold;">T</span>
<span id="t52" class="t" style="left:1012.5px;top:272.0px;height:24px;line-height:24px;font-size:7px;color:#c8c8c8;font-family:'Liberation Serif',serif;font-weight:bold;">1</span>
<span id="t53" class="t" style="left:1027px;top:268.0px;height:24px;line-height:24px;font-size:15px;color:#c8c8c8;transform:scaleX(1.0903);font-family:'Liberation Serif',serif;">T</span>
<div style="left:1027px;top:286.5px;width:10px;height:1px;background:#c8c8c8"></div>
<span id="t54" class="t" style="left:1051px;top:268.5px;height:24px;line-height:24px;font-size:16px;color:#c8c8c8;transform:scaleX(1.0224);font-family:'Liberation Serif',serif;">T</span>
<div style="left:1050px;top:280px;width:12px;height:1px;background:#c8c8c8"></div>
<div style="left:858px;top:296px;width:230px;height:1px;background:#3f3f3f"></div>
<div style="left:858px;top:297px;width:230px;height:1px;background:#626262"></div>
<span id="t55" class="t" style="left:883px;top:300.0px;height:24px;line-height:24px;font-size:17px;color:#858585;transform:scaleX(0.9624);font-family:'Liberation Serif',serif;">fi</span>
<span id="t56" class="t" style="left:906px;top:301.5px;height:24px;line-height:24px;font-size:17px;color:#858585;transform:scaleX(1.0588);font-family:'Liberation Serif',serif;font-style:italic;">o</span>
<svg style="left:912px;top:309px;" width="7" height="5" viewBox="0 0 7 5"><path d="M0 4C2 4 4.6 2.6 6.4 0.4" stroke="#858585" stroke-width="1" fill="none"/></svg>
<span id="t57" class="t" style="left:930px;top:300.0px;height:24px;line-height:24px;font-size:17px;color:#858585;transform:scaleX(1.0579);font-family:'Liberation Serif',serif;">st</span>
<span id="t58" class="t" style="left:953px;top:300.0px;height:24px;line-height:24px;font-size:17px;color:#858585;transform:scaleX(1.3474);font-family:'Liberation Serif',serif;font-style:italic;">A</span>
<span id="t59" class="t" style="left:976px;top:302.0px;height:24px;line-height:24px;font-size:16px;color:#858585;transform:scaleX(1.0000);font-family:'Liberation Serif',serif;font-weight:bold;">aa</span>
<svg style="left:976px;top:305px;" width="16" height="4" viewBox="0 0 16 4"><path d="M0 2.5H15" stroke="#858585" stroke-width="1"/><path d="M16 2.5L12.6 0.4V4.6Z" fill="#858585"/></svg>
<span id="t60" class="t" style="left:1002px;top:300.0px;height:24px;line-height:24px;font-size:17px;color:#858585;transform:scaleX(1.2673);font-family:'Liberation Serif',serif;font-style:italic;">T</span>
<span id="t61" class="t" style="left:1025px;top:300.0px;height:24px;line-height:24px;font-size:17px;color:#858585;font-family:'Liberation Serif',serif;">1</span>
<span id="t62" class="t" style="left:1032px;top:297.0px;height:24px;line-height:24px;font-size:10px;color:#858585;font-family:'Liberation Serif',serif;">st</span>
<span id="t63" class="t" style="left:1050px;top:300.0px;height:24px;line-height:24px;font-size:17px;color:#858585;transform:scaleX(0.9412);font-family:'Liberation Serif',serif;">½</span>
<div style="left:858px;top:328px;width:230px;height:1px;background:#3f3f3f"></div>
<div style="left:858px;top:329px;width:230px;height:1px;background:#626262"></div>
<div style="left:864px;top:333px;width:118px;height:21px;background:linear-gradient(#6f6f6f,#585858);border:1px solid #2f2f2f;border-radius:3px;box-shadow:inset 0 1px 0 rgba(255,255,255,.14),0 1px 0 #5f5f5f;"></div>
<span id="t64" class="t" style="left:872px;top:333.5px;height:20px;line-height:20px;font-size:12px;color:#f0f0f0;transform:scaleX(0.8611);">英語（米国）</span>
<svg style="left:972.75px;top:339.25px;" width="5.5" height="8.5" viewBox="0 0 5.5 8.5"><path d="M0 3.2L2.75 0L5.5 3.2Z M0 5.3L2.75 8.5L5.5 5.3Z" fill="#fff"/></svg>
<svg style="left:989px;top:337px;" width="14" height="12" viewBox="0 0 14 12"><text x="0" y="6" font-size="7.5" font-family="Liberation Sans" fill="#d2d2d2">a</text><text x="6" y="11.4" font-size="11.5" font-family="Liberation Sans" fill="#d2d2d2">a</text></svg>
<div style="left:1009px;top:333px;width:72px;height:21px;background:linear-gradient(#6f6f6f,#585858);border:1px solid #2f2f2f;border-radius:3px;box-shadow:inset 0 1px 0 rgba(255,255,255,.14),0 1px 0 #5f5f5f;"></div>
<span id="t65" class="t" style="left:1017px;top:333.5px;height:20px;line-height:20px;font-size:12px;color:#f0f0f0;transform:scaleX(0.7292);">シャープ</span>
<svg style="left:1070.75px;top:339.25px;" width="5.5" height="8.5" viewBox="0 0 5.5 8.5"><path d="M0 3.2L2.75 0L5.5 3.2Z M0 5.3L2.75 8.5L5.5 5.3Z" fill="#fff"/></svg>
<div style="left:858px;top:362px;width:277px;height:17px;background:linear-gradient(#3e3e3e,#363636)"></div>
<div style="left:858px;top:362px;width:58px;height:18px;background:#535353;border-top:1px solid #676767;border-left:1px solid #626262;border-right:1px solid #2e2e2e"></div>
<div style="left:916px;top:362px;width:36px;height:17px;background:linear-gradient(#4a4a4a,#444);border-right:1px solid #2e2e2e;border-top:1px solid #585858"></div>
<div style="left:952px;top:362px;width:71px;height:17px;background:linear-gradient(#4a4a4a,#444);border-right:1px solid #2e2e2e;border-top:1px solid #585858"></div>
<div style="left:916px;top:378px;width:219px;height:1px;background:#2a2a2a"></div>
<div style="left:916px;top:379px;width:219px;height:1px;background:#646464"></div>
<div style="left:858px;top:380px;width:277px;height:301px;background:#535353;border-left:1px solid #5f5f5f"></div>
<span id="t66" class="t" style="left:866px;top:361.0px;height:20px;line-height:20px;font-size:12px;color:#f0f0f0;transform:scaleX(0.8750);">レイヤー</span>
<span id="t67" class="t" style="left:923px;top:361.0px;height:20px;line-height:20px;font-size:12px;color:#9c9c9c;transform:scaleX(0.9167);">属性</span>
<span id="t68" class="t" style="left:960px;top:361.0px;height:20px;line-height:20px;font-size:12px;color:#9c9c9c;transform:scaleX(0.9167);">スウォッチ</span>
<svg style="left:1117px;top:366.5px;" width="15" height="7" viewBox="0 0 15 7"><path d="M0 1.4H5L2.5 4.2Z" fill="#d8d8d8"/><path d="M6 0.5H15M6 2.5H15M6 4.5H15M6 6.5H15" stroke="#d8d8d8" stroke-width="1"/></svg>
<div style="left:861px;top:382px;width:65px;height:21px;background:linear-gradient(#6f6f6f,#585858);border:1px solid #2f2f2f;border-radius:3px;box-shadow:inset 0 1px 0 rgba(255,255,255,.14),0 1px 0 #5f5f5f;"></div>
<svg style="left:868px;top:388px;" width="9" height="10" viewBox="0 0 9 10"><circle cx="5" cy="4" r="3" fill="none" stroke="#d8d8d8" stroke-width="1.4"/><path d="M3 6.4L0.6 9.4" stroke="#d8d8d8" stroke-width="1.6"/></svg>
<span id="t69" class="t" style="left:883px;top:383.0px;height:20px;line-height:20px;font-size:12px;color:#f0f0f0;transform:scaleX(0.9583);">種類</span>
<svg style="left:915.75px;top:388.75px;" width="5.5" height="8.5" viewBox="0 0 5.5 8.5"><path d="M0 3.2L2.75 0L5.5 3.2Z M0 5.3L2.75 8.5L5.5 5.3Z" fill="#fff"/></svg>
<svg style="left:951px;top:387px;" width="14" height="12" viewBox="0 0 14 12"><rect x="0.6" y="0.6" width="12.8" height="10.8" fill="#5a5a5a" stroke="#cfcfcf" stroke-width="1.2"/><path d="M2 9.6L5.4 5.4L7.6 7.8L9.4 6.2L12 9.6Z" fill="#cfcfcf"/><circle cx="10" cy="3.6" r="1.1" fill="#cfcfcf"/></svg>
<svg style="left:975px;top:387px;" width="12" height="12" viewBox="0 0 12 12"><circle cx="6" cy="6" r="5.2" fill="#cfcfcf"/><path d="M9.7 2.3A5.2 5.2 0 0 1 2.3 9.7Z" fill="#666"/><circle cx="6" cy="6" r="5.2" fill="none" stroke="#cfcfcf" stroke-width="1.1"/></svg>
<span id="t70" class="t" style="left:999.5px;top:380.5px;height:24px;line-height:24px;font-size:16px;color:#cfcfcf;transform:scaleX(1.0307);font-family:'Liberation Serif',serif;font-weight:bold;">T</span>
<svg style="left:1024px;top:387px;" width="12" height="12" viewBox="0 0 12 12"><rect x="1.5" y="1.5" width="9" height="9" fill="none" stroke="#d2d2d2" stroke-width="1.1"/><rect x="0.2" y="0.2" width="3" height="3" fill="#535353" stroke="#d2d2d2" stroke-width="0.9"/><rect x="0.2" y="8.8" width="3" height="3" fill="#535353" stroke="#d2d2d2" stroke-width="0.9"/><rect x="8.8" y="0.2" width="3" height="3" fill="#535353" stroke="#d2d2d2" stroke-width="0.9"/><rect x="8.8" y="8.8" width="3" height="3" fill="#535353" stroke="#d2d2d2" stroke-width="0.9"/></svg>
<svg style="left:1048px;top:386px;" width="12" height="13" viewBox="0 0 12 13"><path d="M4.6 0.6H8.8L11.4 3.2V9.6H4.6Z" fill="#5a5a5a" stroke="#cfcfcf" stroke-width="1.1"/><path d="M8.6 0.8V3.4H11.2" fill="none" stroke="#cfcfcf" stroke-width="1"/><rect x="0.4" y="6.4" width="6.4" height="6.2" fill="#c4c4c4"/></svg>
<div style="left:1087px;top:385px;width:10px;height:17px;background:linear-gradient(#979797 0,#6e6e6e 47%,#3c3c3c 50%,#404040);border:1px solid #3a3a3a;border-radius:1px"></div>
<div style="left:858px;top:406px;width:277px;height:1px;background:#3f3f3f"></div>
<div style="left:858px;top:407px;width:277px;height:1px;background:#626262"></div>
<div style="left:861px;top:410px;width:111px;height:21px;background:linear-gradient(#6f6f6f,#585858);border:1px solid #2f2f2f;border-radius:3px;box-shadow:inset 0 1px 0 rgba(255,255,255,.14),0 1px 0 #5f5f5f;"></div>
<span id="t71" class="t" style="left:870px;top:411.0px;height:20px;line-height:20px;font-size:12px;color:#f0f0f0;transform:scaleX(0.9583);">通常</span>
<svg style="left:961.75px;top:416.75px;" width="5.5" height="8.5" viewBox="0 0 5.5 8.5"><path d="M0 3.2L2.75 0L5.5 3.2Z M0 5.3L2.75 8.5L5.5 5.3Z" fill="#fff"/></svg>
<span id="t72" class="t" style="left:981px;top:411.0px;height:20px;line-height:20px;font-size:12px;color:#f0f0f0;transform:scaleX(0.9333);">不透明度：</span>
<div style="left:1041px;top:411px;width:55px;height:20px;background:#3a3a3a;border:1px solid #2f2f2f;border-bottom-color:#383838;border-radius:2px;box-shadow:0 1px 0 #626262"></div>
<div style="left:1077px;top:411px;width:19px;height:20px;background:linear-gradient(#737373,#5a5a5a);border:1px solid #2f2f2f;border-radius:0 3px 3px 0;box-shadow:inset 0 1px 0 rgba(255,255,255,.13)"></div>
<svg style="left:1084.0px;top:420.0px;" width="5" height="3" viewBox="0 0 5 3"><path d="M0 0H5L2.5 3Z" fill="#fff"/></svg>
<span id="t73" class="t" style="left:1044.5px;top:411.0px;height:20px;line-height:20px;font-size:12px;color:#f0f0f0;transform:scaleX(0.9120);">100%</span>
<div style="left:858px;top:434px;width:277px;height:1px;background:#3f3f3f"></div>
<div style="left:858px;top:435px;width:277px;height:1px;background:#626262"></div>
<span id="t74" class="t" style="left:864px;top:439.0px;height:20px;line-height:20px;font-size:12px;color:#f0f0f0;transform:scaleX(0.7083);">ロック：</span>
<div style="left:905px;top:444px;width:11px;height:11px;background:#8a8a8a;background-image:linear-gradient(45deg,#6a6a6a 25%,transparent 25%,transparent 75%,#6a6a6a 75%),linear-gradient(45deg,#6a6a6a 25%,transparent 25%,transparent 75%,#6a6a6a 75%);background-size:6px 6px;background-position:0 0,3px 3px;opacity:.85"></div>
<svg style="left:925px;top:442px;" width="16" height="14" viewBox="0 0 16 14"><path d="M14.4 0.2L16 1.6L8.4 9.8L6.4 8Z" fill="#8a8a8a"/><path d="M6.4 8.4C8.4 9.2 8.4 11.4 6.6 12.6C4.4 13.8 2 13.6 0.2 13.2C2 12.4 2.6 11.2 3.4 10C4.2 8.6 5.2 8 6.4 8.4Z" fill="#8a8a8a"/></svg>
<svg style="left:948px;top:443px;" width="13" height="13" viewBox="0 0 13 13"><g stroke="#cfcfcf" stroke-width="1.3" fill="none"><path d="M1.6 6.5H11.4M6.5 1.6V11.4"/></g><path d="M6.5 0L8.8 2.8H4.2Z M6.5 13L8.8 10.2H4.2Z M0 6.5L2.8 4.2V8.8Z M13 6.5L10.2 4.2V8.8Z" fill="#cfcfcf"/></svg>
<svg style="left:972px;top:443px;" width="10" height="12" viewBox="0 0 10 12"><path d="M2.6 5.4V3.6A2.4 2.6 0 0 1 7.4 3.6V5.4" fill="none" stroke="#cfcfcf" stroke-width="1.5"/><rect x="0.4" y="5.2" width="9.2" height="6.6" rx="0.8" fill="#cfcfcf"/><rect x="4.4" y="7.2" width="1.2" height="2.6" fill="#555"/></svg>
<span id="t75" class="t" style="left:1008px;top:439.0px;height:20px;line-height:20px;font-size:12px;color:#f0f0f0;transform:scaleX(0.8333);">塗り：</span>
<div style="left:1041px;top:439px;width:55px;height:20px;background:#3a3a3a;border:1px solid #2f2f2f;border-bottom-color:#383838;border-radius:2px;box-shadow:0 1px 0 #626262"></div>
<div style="left:1077px;top:439px;width:19px;height:20px;background:linear-gradient(#737373,#5a5a5a);border:1px solid #2f2f2f;border-radius:0 3px 3px 0;box-shadow:inset 0 1px 0 rgba(255,255,255,.13)"></div>
<svg style="left:1084.0px;top:448.0px;" width="5" height="3" viewBox="0 0 5 3"><path d="M0 0H5L2.5 3Z" fill="#fff"/></svg>
<span id="t76" class="t" style="left:1044.5px;top:439.0px;height:20px;line-height:20px;font-size:12px;color:#f0f0f0;transform:scaleX(0.9120);">100%</span>
<div style="left:858px;top:464px;width:277px;height:1px;background:#3a3a3a"></div>
<div style="left:1120px;top:465px;width:15px;height:197px;background:linear-gradient(90deg,#3c3c3c,#4a4a4a)"></div>
<div style="left:887px;top:465px;width:1px;height:186px;background:#3e3e3e"></div>
<div style="left:888px;top:465px;width:232px;height:38px;background:#596679"></div>
<div style="left:858px;top:503px;width:262px;height:1px;background:#3c3c3c"></div>
<div style="left:858px;top:542px;width:262px;height:1px;background:#3c3c3c"></div>
<div style="left:858px;top:619px;width:262px;height:1px;background:#3c3c3c"></div>
<div style="left:858px;top:651px;width:262px;height:1px;background:#3c3c3c"></div>
<svg style="left:866px;top:479.4px;" width="12" height="9.2" viewBox="0 0 12 9.2"><path d="M0.4 4.7C2.4 0.3 9.6 0.3 11.6 4.7C9.6 8.7 2.4 8.7 0.4 4.7Z" fill="#707070" stroke="#b9b9b9" stroke-width="1.1"/><circle cx="6" cy="4.4" r="2.7" fill="#2f2f2f"/><circle cx="5.1" cy="3.4" r="1" fill="#c8c8c8"/></svg>
<svg style="left:866px;top:518.4px;" width="12" height="9.2" viewBox="0 0 12 9.2"><path d="M0.4 4.7C2.4 0.3 9.6 0.3 11.6 4.7C9.6 8.7 2.4 8.7 0.4 4.7Z" fill="#707070" stroke="#b9b9b9" stroke-width="1.1"/><circle cx="6" cy="4.4" r="2.7" fill="#2f2f2f"/><circle cx="5.1" cy="3.4" r="1" fill="#c8c8c8"/></svg>
<svg style="left:866px;top:557.4px;" width="12" height="9.2" viewBox="0 0 12 9.2"><path d="M0.4 4.7C2.4 0.3 9.6 0.3 11.6 4.7C9.6 8.7 2.4 8.7 0.4 4.7Z" fill="#707070" stroke="#b9b9b9" stroke-width="1.1"/><circle cx="6" cy="4.4" r="2.7" fill="#2f2f2f"/><circle cx="5.1" cy="3.4" r="1" fill="#c8c8c8"/></svg>
<svg style="left:866px;top:630.4px;" width="12" height="9.2" viewBox="0 0 12 9.2"><path d="M0.4 4.7C2.4 0.3 9.6 0.3 11.6 4.7C9.6 8.7 2.4 8.7 0.4 4.7Z" fill="#707070" stroke="#b9b9b9" stroke-width="1.1"/><circle cx="6" cy="4.4" r="2.7" fill="#2f2f2f"/><circle cx="5.1" cy="3.4" r="1" fill="#c8c8c8"/></svg>
<svg style="left:889px;top:474px;" width="20" height="20" viewBox="0 0 20 20"><g fill="none" stroke="#f4f4f4" stroke-width="1.2"><path d="M0.6 5.4V0.6H5.4M14.6 0.6H19.4V5.4M19.4 14.6V19.4H14.6M5.4 19.4H0.6V14.6"/></g><path d="M2.9 17.4V2.9H17.4" fill="none" stroke="#f2f2f2" stroke-width="1"/><path d="M4.2 17.4V4.2H17.4" fill="none" stroke="#0c0c0c" stroke-width="1.6"/></svg>
<svg style="left:895px;top:480px;" width="11" height="11" viewBox="0 0 11 11"><rect x="1.5" y="1.5" width="8" height="8" fill="none" stroke="#c2c6cc" stroke-width="1.1"/><rect x="0.2" y="0.2" width="3" height="3" fill="#535353" stroke="#c2c6cc" stroke-width="0.9"/><rect x="0.2" y="7.8" width="3" height="3" fill="#535353" stroke="#c2c6cc" stroke-width="0.9"/><rect x="7.8" y="0.2" width="3" height="3" fill="#535353" stroke="#c2c6cc" stroke-width="0.9"/><rect x="7.8" y="7.8" width="3" height="3" fill="#535353" stroke="#c2c6cc" stroke-width="0.9"/></svg>
<span id="t77" class="t" style="left:917px;top:474.5px;height:20px;line-height:20px;font-size:12px;color:#f0f0f0;transform:scaleX(0.7336);">シェイプ&nbsp; 1</span>
<span id="t78" class="t" style="left:899px;top:508.5px;height:28px;line-height:28px;font-size:21px;color:#c9c9c9;transform:scaleX(1.0702);font-family:'Liberation Serif',serif;font-weight:bold;">T</span>
<span id="t79" class="t" style="left:933px;top:513.5px;height:20px;line-height:20px;font-size:12px;color:#f0f0f0;transform:scaleX(1.0274);">note</span>
<div style="left:891px;top:546px;width:24px;height:32px;background:#fff;border:1px solid #000"></div>
<div style="left:901px;top:564px;width:15px;height:15px;background:#535353;border-left:1px solid #000;border-top:1px solid #000"></div>
<svg style="left:903px;top:566px;" width="11" height="11" viewBox="0 0 11 11"><rect x="1.5" y="1.5" width="8" height="8" fill="none" stroke="#d2d2d2" stroke-width="1.1"/><rect x="0.2" y="0.2" width="3" height="3" fill="#535353" stroke="#d2d2d2" stroke-width="0.9"/><rect x="0.2" y="7.8" width="3" height="3" fill="#535353" stroke="#d2d2d2" stroke-width="0.9"/><rect x="7.8" y="0.2" width="3" height="3" fill="#535353" stroke="#d2d2d2" stroke-width="0.9"/><rect x="7.8" y="7.8" width="3" height="3" fill="#535353" stroke="#d2d2d2" stroke-width="0.9"/></svg>
<span id="t80" class="t" style="left:925px;top:552.5px;height:20px;line-height:20px;font-size:12px;color:#f0f0f0;transform:scaleX(0.9779);">長方形 1</span>
<span class="t" style="left:1094px;top:551px;height:24px;line-height:24px;font-size:15px;font-style:italic;color:#cfcfcf;letter-spacing:-1px">fx</span>
<div style="left:1109.5px;top:543px;width:10.5px;height:39px;background:linear-gradient(#9a9a9a,#5c5c5c)"></div>
<svg style="left:1112px;top:560px;" width="6" height="4" viewBox="0 0 6 4"><path d="M0 4L3 0L6 4Z" fill="#3a3a3a"/></svg>
<svg style="left:907px;top:586.4px;" width="12" height="9.2" viewBox="0 0 12 9.2"><path d="M0.4 4.7C2.4 0.3 9.6 0.3 11.6 4.7C9.6 8.7 2.4 8.7 0.4 4.7Z" fill="#707070" stroke="#b9b9b9" stroke-width="1.1"/><circle cx="6" cy="4.4" r="2.7" fill="#2f2f2f"/><circle cx="5.1" cy="3.4" r="1" fill="#c8c8c8"/></svg>
<span id="t81" class="t" style="left:926px;top:581.0px;height:20px;line-height:20px;font-size:12px;color:#f0f0f0;transform:scaleX(0.9583);">効果</span>
<svg style="left:924px;top:603.9px;" width="12" height="9.2" viewBox="0 0 12 9.2"><path d="M0.4 4.7C2.4 0.3 9.6 0.3 11.6 4.7C9.6 8.7 2.4 8.7 0.4 4.7Z" fill="#707070" stroke="#b9b9b9" stroke-width="1.1"/><circle cx="6" cy="4.4" r="2.7" fill="#2f2f2f"/><circle cx="5.1" cy="3.4" r="1" fill="#c8c8c8"/></svg>
<span id="t82" class="t" style="left:943px;top:599.0px;height:20px;line-height:20px;font-size:12px;color:#f0f0f0;transform:scaleX(0.9722);">境界線</span>
<div style="left:891px;top:623.5px;width:32px;height:23px;background:#fff;border:1px solid #000"></div>
<span id="t83" class="t" style="left:934px;top:625.0px;height:20px;line-height:20px;font-size:12px;color:#f0f0f0;transform:scaleX(0.9167);font-style:italic;font-weight:bold;">背景</span>
<svg style="left:1093px;top:629px;" width="10" height="12" viewBox="0 0 10 12"><path d="M2.6 5.4V3.6A2.4 2.6 0 0 1 7.4 3.6V5.4" fill="none" stroke="#cfcfcf" stroke-width="1.3"/><rect x="0.7" y="5.3" width="8.6" height="6" rx="0.6" fill="none" stroke="#cfcfcf" stroke-width="1.3"/><rect x="4.3" y="7.2" width="1.4" height="2.4" fill="#cfcfcf"/></svg>
<div style="left:858px;top:652px;width:262px;height:10px;background:#474747"></div>
<div style="left:858px;top:662px;width:277px;height:1px;background:#333"></div>
<div style="left:858px;top:663px;width:277px;height:18px;background:#535353;border-top:1px solid #686868"></div>
<svg style="left:932px;top:667px;" width="15" height="9" viewBox="0 0 15 9"><g fill="none" stroke="#8e8e8e" stroke-width="1.8"><rect x="1" y="1" width="7.6" height="7" rx="3.5"/><rect x="6.4" y="1" width="7.6" height="7" rx="3.5"/></g><rect x="4.6" y="3.2" width="5.8" height="2.6" fill="#535353"/><path d="M4 4.5H11" stroke="#8e8e8e" stroke-width="1.8"/></svg>
<span class="t" style="left:961px;top:661px;height:24px;line-height:24px;font-size:15px;font-style:italic;color:#cfcfcf;letter-spacing:-1px">fx</span>
<svg style="left:973.5px;top:678.0px;" width="4" height="2" viewBox="0 0 4 2"><path d="M0 0H4L2.0 2Z" fill="#e0e0e0"/></svg>
<svg style="left:987px;top:668px;" width="14" height="10" viewBox="0 0 14 10"><rect width="14" height="10" fill="#c9c9c9"/><circle cx="7" cy="5" r="2.7" fill="#555"/></svg>
<svg style="left:1014px;top:666.5px;" width="12" height="12" viewBox="0 0 12 12"><circle cx="6" cy="6" r="5" fill="#555" stroke="#cfcfcf" stroke-width="1.4"/><path d="M9.6 2.4A5 5 0 0 1 2.4 9.6Z" fill="#cfcfcf"/></svg>
<svg style="left:1027.5px;top:678.0px;" width="4" height="2" viewBox="0 0 4 2"><path d="M0 0H4L2.0 2Z" fill="#e0e0e0"/></svg>
<svg style="left:1041px;top:667px;" width="13" height="11" viewBox="0 0 13 11"><path d="M0 1.4C0 0.6 0.4 0.2 1.2 0.2H4.6L5.8 1.8H12.2C12.7 1.8 13 2.1 13 2.6V10.2H0Z" fill="#c9c9c9"/></svg>
<svg style="left:1069px;top:668px;" width="11" height="11" viewBox="0 0 11 11"><path d="M1 0.2H10.8V10.8H4.6V5.2H1Z" fill="#cdcdcd"/><path d="M0.2 6.8L3.8 10.6V6.8Z" fill="#cdcdcd"/></svg>
<svg style="left:1095px;top:666.5px;" width="12" height="12" viewBox="0 0 12 12"><path d="M0.4 3.2H11.6" stroke="#cfcfcf" stroke-width="1.4"/><path d="M4 2.6V1.4C4 0.8 4.4 0.5 5 0.5H7C7.6 0.5 8 0.8 8 1.4V2.6" fill="none" stroke="#cfcfcf" stroke-width="1"/><path d="M1.6 4.4H10.4L9.8 11.6H2.2Z" fill="none" stroke="#cfcfcf" stroke-width="1.1"/><path d="M4.2 5V11M6 5V11M7.8 5V11" stroke="#cfcfcf" stroke-width="0.9"/></svg>
</body></html>
